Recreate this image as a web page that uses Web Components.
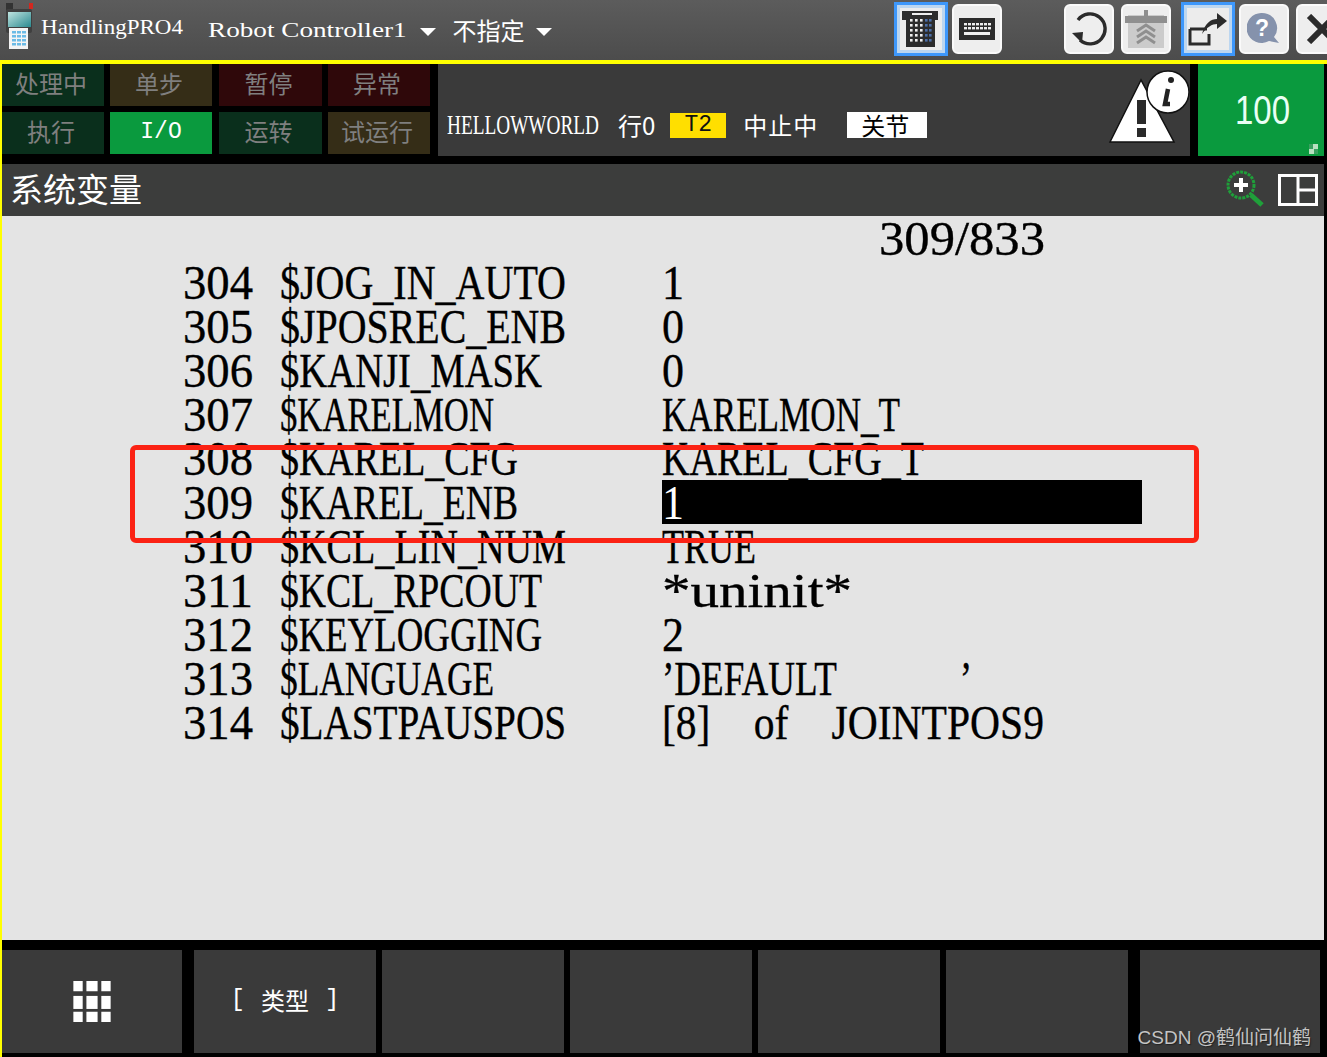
<!DOCTYPE html>
<html>
<head>
<meta charset="utf-8">
<title>HandlingPRO4</title>
<style>
  html, body { margin: 0; padding: 0; background: #000; }
  body { width: 1327px; height: 1057px; overflow: hidden; }
</style>
</head>
<body>
<tp-screen>
  <tp-topbar slot="top"></tp-topbar>
  <tp-status slot="status"></tp-status>
  <tp-title slot="title">系统变量</tp-title>
  <var-list slot="content" header="309/833">
    <var-row num="304" name="$JOG_IN_AUTO" value="1"></var-row>
    <var-row num="305" name="$JPOSREC_ENB" value="0"></var-row>
    <var-row num="306" name="$KANJI_MASK" value="0"></var-row>
    <var-row num="307" name="$KARELMON" value="KARELMON_T"></var-row>
    <var-row num="308" name="$KAREL_CFG" value="KAREL_CFG_T"></var-row>
    <var-row num="309" name="$KAREL_ENB" value="1" selected></var-row>
    <var-row num="310" name="$KCL_LIN_NUM" value="TRUE"></var-row>
    <var-row num="311" name="$KCL_RPCOUT" value="*uninit*"></var-row>
    <var-row num="312" name="$KEYLOGGING" value="2"></var-row>
    <var-row num="313" name="$LANGUAGE" value="’DEFAULT    ’" gap="28"></var-row>
    <var-row num="314" name="$LASTPAUSPOS" value="[8] of JOINTPOS9" gap="38"></var-row>
  </var-list>
  <tp-softkeys slot="keys"></tp-softkeys>
</tp-screen>

<script>
const CJK = '"Noto Sans CJK SC", sans-serif';

// squeezes a proportional font onto the pendant's fixed character cell
class FitText extends HTMLElement {
  constructor() {
    super();
    this.attachShadow({ mode: 'open' }).innerHTML = `
      <style>
        :host { display: inline-block; vertical-align: top; }
        span { display: inline-block; white-space: pre; transform-origin: 0 50%; }
      </style>
      <span><slot></slot></span>`;
  }
  connectedCallback() { this.fit(); }
  fit() {
    const cell = +this.getAttribute('cell') || 24;
    const text = this.textContent;
    const inner = this.shadowRoot.querySelector('span');
    inner.style.transform = 'none';
    const w = inner.getBoundingClientRect().width;
    const total = text.length * cell;
    this.style.width = total + 'px';
    if (w) inner.style.transform = `scaleX(${(total - 2) / w})`;
  }
}
customElements.define('fit-text', FitText);

class TpScreen extends HTMLElement {
  constructor() {
    super();
    this.attachShadow({ mode: 'open' }).innerHTML = `
      <style>
        :host { display: grid; width: 1327px; height: 1057px; grid-template-rows: 60px 4px 1fr; }
        .line { background: #ffff00; }
        .main { display: grid; grid-template-rows: 100px 52px 724px 10px 103px 4px; border-left: 2px solid #ffff00; padding-right: 3px; min-height: 0; }
      </style>
      <slot name="top"></slot>
      <div class="line"></div>
      <div class="main">
        <slot name="status"></slot>
        <slot name="title"></slot>
        <slot name="content"></slot>
        <div></div>
        <slot name="keys"></slot>
      </div>`;
  }
}
customElements.define('tp-screen', TpScreen);

class TpBtn extends HTMLElement {
  constructor() {
    super();
    this.attachShadow({ mode: 'open' }).innerHTML = `
      <style>
        :host { box-sizing: border-box; width: 50px; height: 50px; border-radius: 6px; background: #eeeeee; border: 2px solid #fafafa;
                display: flex; align-items: center; justify-content: center; flex: none; }
        :host([active]) { width: 54px; height: 54px; border-radius: 0; border: 3px solid #3d97fb; box-shadow: inset 0 0 0 3px #bcd6f0; background: #ececec; }
        ::slotted(svg) { display: block; }
      </style>
      <slot></slot>`;
  }
}
customElements.define('tp-btn', TpBtn);

class TpTopbar extends HTMLElement {
  constructor() {
    super();
    this.attachShadow({ mode: 'open' }).innerHTML = `
      <style>
        :host { display: flex; align-items: center; height: 60px; overflow: hidden; color: #fff; position: relative;
                background: linear-gradient(#5c5c5c, #4c4c4c); }
        .logo { width: 30px; height: 48px; margin: 2px 0 0 3px; flex: none; align-self: flex-start; }
        .name { margin-left: 8px; font: 22px/24px "Liberation Serif", serif; position: relative; top: -3px; }
        .ctl { margin-left: 23px; font: 22px/24px "Liberation Serif", serif; }
        .caret { width: 0; height: 0; border: 8px solid transparent; border-top: 8px solid #fff; border-bottom: 0; margin: 4px 0 0 11px; flex: none; }
        .cjk { margin-left: 17px; font: 24px/30px ${CJK}; letter-spacing: 0; }
        .btns { display: flex; align-items: center; position: absolute; left: 894px; top: 2px; height: 54px; }
        .btns > * { margin-left: var(--m, 4px); }
      </style>
      <svg class="logo" viewBox="0 0 30 48">
        <rect x="3" y="1" width="7" height="7" fill="#333"/><rect x="26" y="1" width="5" height="6" fill="#d2271f"/>
        <rect x="3" y="7" width="26" height="24" rx="2" fill="#3f3f3f"/>
        <defs><linearGradient id="lcd" x1="0" y1="0" x2="1" y2="1"><stop offset="0" stop-color="#bfe4e0"/><stop offset="1" stop-color="#2b8a90"/></linearGradient></defs>
        <rect x="5" y="10" width="23" height="15" fill="url(#lcd)"/>
        <rect x="6" y="26" width="19" height="21" fill="#f4f4f4"/>
        <g fill="#6cbbe6">
          ${[29, 33, 37, 41].map(y => [9, 14, 19].map(x => `<rect x="${x}" y="${y}" width="4" height="2.500"/>`).join('')).join('')}
        </g>
      </svg>
      <fit-text class="name" cell="12">HandlingPRO4</fit-text>
      <fit-text class="ctl" cell="11.8">Robot Controller1</fit-text>
      <span class="caret"></span>
      <span class="cjk">不指定</span>
      <span class="caret"></span>
      <div class="btns">
        <tp-btn active style="--m:0">
          <svg width="38" height="38" viewBox="0 0 38 38">
            <path d="M0 1h36v9h-3v27H4V10H0z" fill="#2c2c2c"/>
            <rect x="10" y="3" width="20" height="2" fill="#eee"/>
            ${[9, 14, 19, 24, 29].map(y => [8, 13, 18, 23, 27].map(x => `<rect x="${x}" y="${y}" width="2.600" height="2.600" fill="${x > 21 ? '#4d6fa8' : '#eee'}"/>`).join('')).join('')}
          </svg>
        </tp-btn>
        <tp-btn>
          <svg width="36" height="22" viewBox="0 0 36 22">
            <rect width="36" height="22" fill="#2c2c2c"/>
            ${[5, 9].map(y => [5, 9, 13, 17, 21, 25, 29].map(x => `<rect x="${x}" y="${y}" width="3" height="2.400" fill="#eee"/>`).join('')).join('')}
            <rect x="5" y="14" width="26" height="3" fill="#eee"/>
          </svg>
        </tp-btn>
        <tp-btn style="--m:62px">
          <svg width="36" height="36" viewBox="0 0 36 36">
            <path d="M7 9A15 15 0 1 1 9 29" fill="none" stroke="#2b2b2b" stroke-width="3.400"/>
            <path d="M1 22l11-1-1 11z" fill="#2b2b2b"/>
          </svg>
        </tp-btn>
        <tp-btn style="--m:7px">
          <svg width="42" height="38" viewBox="0 0 42 38">
            <rect x="3" y="5" width="36" height="33" fill="#cbcbcb"/>
            <rect x="0" y="6" width="42" height="7" fill="#8f8f8f"/>
            <rect x="19" y="0" width="4" height="8" fill="#8f8f8f"/>
            <path d="M12 21l9-6 9 6M12 27l9-6 9 6M12 33l9-6 9 6" fill="none" stroke="#8f8f8f" stroke-width="3"/>
          </svg>
        </tp-btn>
        <tp-btn active style="--m:10px">
          <svg width="40" height="34" viewBox="0 0 40 34">
            <path d="M2 17h17M2 17v15h19V22" fill="none" stroke="#2b2b2b" stroke-width="3"/>
            <path d="M14 22C17 11 23 7 29 7V1l10 8-10 8v-5c-5 0-10 3-15 10z" fill="#2b2b2b"/>
          </svg>
        </tp-btn>
        <tp-btn>
          <svg width="34" height="32" viewBox="0 0 34 32">
            <path d="M15 0a15 15 0 1 0 7 28l10 2-5-6a15 15 0 0 0-12-24z" fill="#8592ac"/>
            <text x="15" y="23" text-anchor="middle" font-family="Liberation Sans, sans-serif" font-weight="700" font-size="23" fill="#fff">?</text>
          </svg>
        </tp-btn>
        <tp-btn style="--m:7px">
          <svg width="38" height="30" viewBox="0 0 38 30">
            <path d="M7 2l26 26M33 2L7 28" stroke="#2b2b2b" stroke-width="6" fill="none"/>
          </svg>
        </tp-btn>
      </div>`;
  }
}
customElements.define('tp-topbar', TpTopbar);

class TpStatus extends HTMLElement {
  constructor() {
    super();
    const tiles = [
      ['处理中', 'g'], ['单步', 'o'], ['暂停', 'r'], ['异常', 'r'],
      ['执行', 'g'], ['I/O', 'on'], ['运转', 'g'], ['试运行', 'o'],
    ];
    this.attachShadow({ mode: 'open' }).innerHTML = `
      <style>
        :host { display: grid; grid-template-columns: 428px 752px 126px; column-gap: 8px; height: 92px; background: #000; }
        .tiles { display: grid; grid-template-columns: 102px 102px 104px 102px; grid-template-rows: 42px 42px; gap: 6px; }
        .t { display: flex; align-items: center; justify-content: center; font: 24px/1 ${CJK}; color: #7f7f7f; padding: 0 4px 4px 0; box-sizing: border-box; }
        .t:nth-child(4n+3) { margin-left: 1px; }
        .g { background: #0a2f1c; } .o { background: #352d17; } .r { background: #2f080a; }
        .t.on { background: #0a9a3e; color: #fff; font: 23px/1 "Liberation Mono", monospace; padding: 0 0 2px; }
        .job { background: #3a3a3a; display: flex; align-items: flex-end; padding: 0 0 18px 9px; color: #fff; position: relative; }
        .job > * { flex: none; }
        .prog { font: 28px/26px "Liberation Serif", serif; }
        .cj { font: 24px/26px ${CJK}; }
        .line { margin-left: 17px; }
        .t2 { margin-left: 15px; width: 56px; height: 25px; background: #ffdf00; color: #111; font: 23px/25px "Liberation Mono", monospace; text-align: center; }
        .stop { margin-left: 17px; letter-spacing: 1px; }
        .mode { margin-left: 29px; width: 80px; height: 26px; background: #fff; color: #000; padding-left: 14px; box-sizing: border-box; }
        .warn { position: absolute; left: 670px; top: 2px; width: 84px; height: 80px; }
        .ovr { background: #0a9a3e; color: #e9fff4; font: 300 40px/92px "Liberation Sans", sans-serif; text-align: center; position: relative; padding-left: 4px; box-sizing: border-box; }
        .ovr i { position: absolute; right: 6px; bottom: 2px; width: 9px; height: 10px; background: conic-gradient(#b8e0c0 25%, #3aa060 0 50%, #b8e0c0 0 75%, #3aa060 0); }
      </style>
      <div class="tiles">
        ${tiles.map(([t, c]) => `<div class="t ${c}">${t}</div>`).join('')}
      </div>
      <div class="job">
        <fit-text class="prog" cell="14">HELLOWWORLD</fit-text>
        <span class="cj line">行0</span>
        <span class="t2">T2</span>
        <span class="cj stop">中止中</span>
        <span class="cj mode">关节</span>
        <svg class="warn" viewBox="0 0 84 80">
          <path d="M33 14L2 76h64z" fill="#fff" stroke="#111" stroke-width="1.500"/>
          <rect x="29" y="34" width="9" height="24" fill="#2a2a2a"/>
          <rect x="29" y="62" width="9" height="9" fill="#2a2a2a"/>
          <circle cx="60" cy="26" r="21" fill="#fff" stroke="#111" stroke-width="1.500"/>
          <path d="M60 23l-3 15h5" fill="none" stroke="#222" stroke-width="4.500"/>
          <circle cx="63" cy="14" r="3" fill="#222"/>
        </svg>
      </div>
      <div class="ovr"><fit-text cell="19">100</fit-text><i></i></div>`;
  }
}
customElements.define('tp-status', TpStatus);

class TpTitle extends HTMLElement {
  constructor() {
    super();
    this.attachShadow({ mode: 'open' }).innerHTML = `
      <style>
        :host { display: flex; align-items: center; box-sizing: border-box; height: 52px; padding: 0 6px 0 8px; background: #3c3d3c; color: #fff; font: 33px/1 ${CJK}; }
        .label { position: relative; top: -2px; }
        .tools { margin-left: auto; display: flex; align-items: center; gap: 12px; }
        svg { display: block; }
      </style>
      <span class="label"><slot></slot></span>
      <div class="tools">
        <svg width="40" height="40" viewBox="0 0 40 40">
          <circle cx="15" cy="15" r="13" fill="none" stroke="#1fa03a" stroke-width="3" stroke-dasharray="3 1"/>
          <path d="M8 15h14M15 8v14" stroke="#fff" stroke-width="4"/>
          <path d="M25 25l11 10" stroke="#1fa03a" stroke-width="5"/>
        </svg>
        <svg width="40" height="32" viewBox="0 0 40 32">
          <path d="M1.500 1.500h37v29h-37zM20 1.500v29M20 16h18" fill="none" stroke="#fff" stroke-width="3"/>
        </svg>
      </div>`;
  }
}
customElements.define('tp-title', TpTitle);

class VarList extends HTMLElement {
  constructor() {
    super();
    this.attachShadow({ mode: 'open' }).innerHTML = `
      <style>
        :host { display: block; position: relative; background: #e4e4e4; color: #000; -webkit-text-stroke: 0.35px #000; }
        .hd { height: 44px; padding-left: 877px; box-sizing: border-box; font: 48px/46px "Liberation Serif", serif; }
        .mark { position: absolute; left: 128px; top: 229px; width: 1069px; height: 98px; box-sizing: border-box; border: 5px solid #fb2214; border-radius: 6px; }
      </style>
      <div class="hd"><fit-text>${this.getAttribute('header')}</fit-text></div>
      <slot></slot>
      <div class="mark"></div>`;
  }
}
customElements.define('var-list', VarList);

class VarRow extends HTMLElement {
  constructor() {
    super();
    this.attachShadow({ mode: 'open' }).innerHTML = `
      <style>
        :host { display: grid; grid-template-columns: 97px 382px 480px; grid-template-rows: 44px; height: 44px; padding-left: 181px; font: 48px/46px "Liberation Serif", serif; }
        :host([selected]) .v { background: #000; color: #fff; -webkit-text-stroke: 0; }
      </style>
      <div><fit-text class="n"></fit-text></div>
      <div><fit-text class="k"></fit-text></div>
      <div class="v"><fit-text class="val"></fit-text></div>`;
  }
  connectedCallback() {
    const put = (sel, attr) => {
      const el = this.shadowRoot.querySelector(sel);
      el.textContent = this.getAttribute(attr);
      el.fit();
    };
    // values with blanks keep their cells: blanks are widened before the squeeze
    this.shadowRoot.querySelector('.val').style.wordSpacing = (this.getAttribute('gap') || 0) + 'px';
    put('.n', 'num');
    put('.k', 'name');
    put('.val', 'value');
  }
}
customElements.define('var-row', VarRow);

class TpSoftkeys extends HTMLElement {
  constructor() {
    super();
    const dot = [0, 1, 2].map(r => [0, 1, 2].map(c =>
      `<rect x="${[0, 14, 30][c]}" y="${[0, 16, 33][r]}" width="${c === 1 ? 12 : 10}" height="${r === 1 ? 14 : 11}" fill="#fff"/>`).join('')).join('');
    this.attachShadow({ mode: 'open' }).innerHTML = `
      <style>
        :host { display: grid; grid-template-columns: 192px repeat(4, 188px) 194px 180px; height: 103px; width: 1318px; }
        .k { background: #3a3a3a; color: #fff; display: flex; align-items: center; justify-content: center; position: relative; font: 24px/1 ${CJK}; margin-right: 6px; padding-bottom: 3px; box-sizing: border-box; }
        .wide { margin-right: 12px; }
        .last { margin-right: 0; }
        .wm { position: absolute; right: 9px; bottom: 3px; color: #c4c4c4; font: 19px/24px "Liberation Sans", "Noto Sans CJK SC", sans-serif; text-shadow: 1px 1px 1px #222; white-space: nowrap; }
        .br { display: inline-block; margin: 0 16px; font-family: "Liberation Mono", monospace; }
        svg { position: relative; top: 1.500px; }
      </style>
      <div class="k wide"><svg width="40" height="41" viewBox="0 0 40 44">${dot}</svg></div>
      <div class="k"><span class="br" style="margin-left:0">[</span>类型<span class="br" style="margin-right:0">]</span></div>
      <div class="k"></div><div class="k"></div><div class="k"></div><div class="k wide"></div>
      <div class="k last"><span class="wm">CSDN @鹤仙问仙鹤</span></div>`;
  }
}
customElements.define('tp-softkeys', TpSoftkeys);
</script>
</body>
</html>
